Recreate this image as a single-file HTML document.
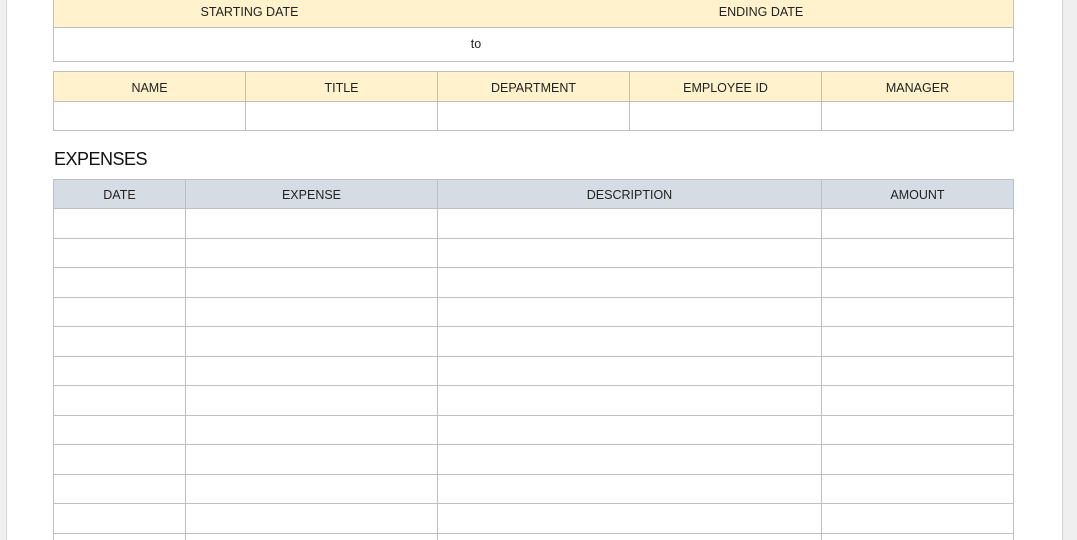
<!DOCTYPE html>
<html><head><style>
html,body{margin:0;width:1077px;height:540px;overflow:hidden}
body{background:#efefef;font-family:"Liberation Sans",sans-serif}
#root{position:absolute;left:0;top:0;width:1077px;height:540px;overflow:hidden;background:#efefef}
.page{position:absolute;left:6px;top:0;width:1055px;height:540px;background:#fff;border-left:1px solid #d4d4d4;border-right:1px solid #d4d4d4}
.c{position:absolute;box-sizing:border-box;border:1px solid #bfbfbf;font-size:12.5px;color:#222;display:flex;align-items:center;justify-content:center;padding-top:2px}
.y{background:#fff2cc}.g{background:#d6dce4}
</style></head><body>
<div id="root">
<div class="page"></div>
<div id="w"></div>
<div style="position:absolute;left:54px;top:149px;font-size:18px;color:#111;letter-spacing:-0.5px">EXPENSES</div>
</div>
<script>
var h='';
function c(x1,y1,x2,y2,cls,t){h+='<div class="c '+cls+'" style="left:'+x1+'px;top:'+y1+'px;width:'+(x2-x1+1)+'px;height:'+(y2-y1+1)+'px">'+(t||'')+'</div>';}
c(53,-5,1013,27,'y','');
h+='<div style="position:absolute;left:53px;top:5px;width:393px;text-align:center;font-size:12.5px;color:#222">STARTING DATE</div>';
h+='<div style="position:absolute;left:510px;top:5px;width:502px;text-align:center;font-size:12.5px;color:#222">ENDING DATE</div>';
c(53,27,1013,61,'','');
h+='<div style="position:absolute;left:456px;top:37px;width:40px;text-align:center;font-size:12.5px;color:#222">to</div>';
var cols=[53,245,437,629,821,1013],n=['NAME','TITLE','DEPARTMENT','EMPLOYEE ID','MANAGER'];
for(var i=0;i<5;i++){c(cols[i],71,cols[i+1],101,'y',n[i]);c(cols[i],101,cols[i+1],130,'','');}
var c3=[53,185,437,821,1013],n3=['DATE','EXPENSE','DESCRIPTION','AMOUNT'];
var ys=[179,208,238,267,297,326,356,385,415,444,474,503,533,562];
for(var i=0;i<4;i++){for(var r=0;r<ys.length-1;r++){c(c3[i],ys[r],c3[i+1],ys[r+1],r==0?'g':'',r==0?n3[i]:'');}}
document.getElementById('w').innerHTML=h;
</script>
</body></html>
